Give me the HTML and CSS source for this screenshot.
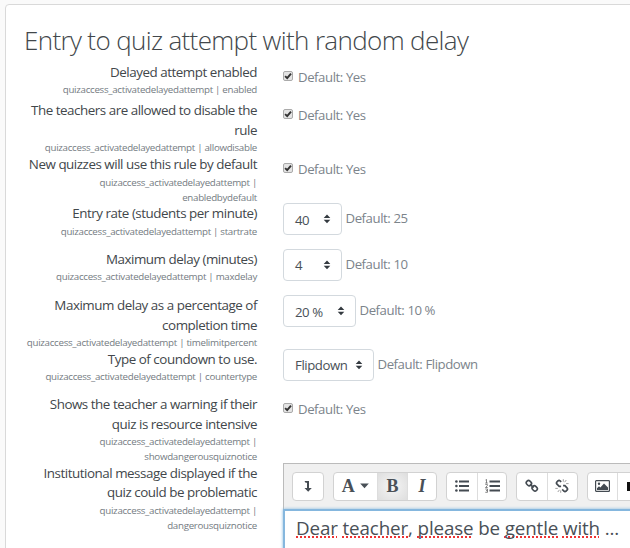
FILE: index.html
```html
<!DOCTYPE html>
<html lang="en">
<head>
<meta charset="utf-8">
<title>Entry to quiz attempt with random delay</title>
<link rel="stylesheet" href="styles.css">
</head>
<body>
<svg width="0" height="0" class="defs" aria-hidden="true">
  <symbol id="check" viewBox="0 0 10 10"><path d="M2.1 5.1 4.2 7.2 8 2.6" fill="none" stroke="#333" stroke-width="1.9"/></symbol>
  <symbol id="sort" viewBox="0 0 8 10"><path d="M4 .6 7.3 4.1H.7zM4 9.2.7 5.7h6.6z" fill="#343a40"/></symbol>
</svg>
<main class="card">
  <h1>Entry to quiz attempt with random delay</h1>
  <div class="settings">
    <div class="label">Delayed attempt enabled<small>quizaccess_activatedelayedattempt | enabled</small></div>
    <div class="field check"><span class="box"><svg><use href="#check"/></svg></span><span>Default: Yes</span></div>

    <div class="label">The teachers are allowed to disable the<br>rule<small>quizaccess_activatedelayedattempt | allowdisable</small></div>
    <div class="field check"><span class="box"><svg><use href="#check"/></svg></span><span>Default: Yes</span></div>

    <div class="label">New quizzes will use this rule by default<small>quizaccess_activatedelayedattempt |<br>enabledbydefault</small></div>
    <div class="field check"><span class="box"><svg><use href="#check"/></svg></span><span>Default: Yes</span></div>

    <div class="label">Entry rate (students per minute)<small>quizaccess_activatedelayedattempt | startrate</small></div>
    <div class="field"><span class="select number">40<svg><use href="#sort"/></svg></span><span>Default: 25</span></div>

    <div class="label">Maximum delay (minutes)<small>quizaccess_activatedelayedattempt | maxdelay</small></div>
    <div class="field"><span class="select number">4<svg><use href="#sort"/></svg></span><span>Default: 10</span></div>

    <div class="label">Maximum delay as a percentage of<br>completion time<small>quizaccess_activatedelayedattempt | timelimitpercent</small></div>
    <div class="field"><span class="select percent">20 %<svg><use href="#sort"/></svg></span><span>Default: 10 %</span></div>

    <div class="label">Type of coundown to use.<small>quizaccess_activatedelayedattempt | countertype</small></div>
    <div class="field"><span class="select type">Flipdown<svg><use href="#sort"/></svg></span><span>Default: Flipdown</span></div>

    <div class="label">Shows the teacher a warning if their<br>quiz is resource intensive<small>quizaccess_activatedelayedattempt |<br>showdangerousquiznotice</small></div>
    <div class="field check"><span class="box"><svg><use href="#check"/></svg></span><span>Default: Yes</span></div>

    <div class="label">Institutional message displayed if the<br>quiz could be problematic<small>quizaccess_activatedelayedattempt |<br>dangerousquiznotice</small></div>
    <div class="editor">
      <div class="toolbar">
        <div class="group"><span class="btn"><svg width="8" height="12" viewBox="0 0 8 12"><path d="M.5 1H5v7h2.8L4.2 11.8.5 8H3V2.8H1.6z" fill="#444b52"/></svg></span></div>
        <div class="group">
          <span class="btn wide serif">A<svg width="9" height="6" viewBox="0 0 9 6"><path d="M.2.4h8.6L4.5 5.2z" fill="#495057"/></svg></span>
          <span class="btn serif active">B</span>
          <span class="btn serif italic">I</span>
        </div>
        <div class="group">
          <span class="btn"><svg width="14" height="12" viewBox="0 0 14 12" fill="#444b52"><path d="M4 .6h10v1.8H4zM4 5.1h10v1.8H4zM4 9.6h10v1.8H4z"/><circle cx="1.4" cy="1.5" r="1.3"/><circle cx="1.4" cy="6" r="1.3"/><circle cx="1.4" cy="10.5" r="1.3"/></svg></span>
          <span class="btn"><svg width="15" height="14" viewBox="0 0 15 14"><path d="M4.5 1.6H15v1.8H4.5zM4.5 6.1H15v1.8H4.5zM4.5 10.6H15v1.8H4.5z" fill="#444b52"/><path d="M.5 1 1.5.4V4M.3 4h2.4M.3 5.4h2v1.3L.5 8.5h2.2M.3 10h2.2v3.3H.3M1 11.6h1.4" fill="none" stroke="#666" stroke-width=".8"/></svg></span>
        </div>
        <div class="group">
          <span class="btn"><svg width="14" height="14" viewBox="0 0 14 14" fill="none" stroke="#444b52" stroke-width="1.6"><rect x="1.2" y="2" width="5.4" height="4.4" rx="2" transform="rotate(45 3.9 4.2)"/><rect x="7" y="7.2" width="5.4" height="4.4" rx="2" transform="rotate(45 9.7 9.4)"/><path d="m5 5.2 3.6 3.4"/></svg></span>
          <span class="btn"><svg width="14" height="14" viewBox="0 0 14 14" fill="none" stroke="#444b52" stroke-width="1.7"><path d="M6.2 2.9 5.1 1.8Q4 .9 2.8 2L2 2.8Q.9 4 2 5.2l2.2 2.1h1.9M8.1 6.6h1.8L12 8.8q1.1 1.2 0 2.4l-.8.8q-1.2 1.1-2.4 0l-1.6-1.6"/><path d="M8.3.2v2.5M11.3 1 9.6 3.2M13.6 4.6h-2.5M.3 9.4h2.5M2.8 13l1.7-2.2M5.7 13.8v-2.4" stroke="#888" stroke-width=".8"/></svg></span>
        </div>
        <div class="group">
          <span class="btn"><svg width="15" height="12" viewBox="0 0 15 12"><rect x=".6" y=".6" width="13.8" height="10.8" rx=".7" fill="none" stroke="#444b52" stroke-width="1.2"/><circle cx="4" cy="3.7" r="1.2" fill="#444b52"/><path d="M2 10V8.2l2-2 1.3 1.2L9 3.4l4 4V10z" fill="#444b52"/></svg></span>
          <span class="btn media"><svg width="14" height="9" viewBox="0 0 14 9"><path d="M0 0h3v3.2h6V0h3v9H9V5.6H3V9H0z" fill="#111"/></svg></span>
        </div>
      </div>
      <div class="content"><u>Dear</u> <u>teacher</u>, <u>please</u> be <u>gentle</u> <u>with</u> ...</div>
    </div>
  </div>
</main>
</body>
</html>
```
FILE: styles.css
```css
* { box-sizing: border-box; }
body {
  margin: 0;
  padding: 4px 0 0 5px;
  width: 630px;
  height: 548px;
  overflow: hidden;
  background: #fafafa;
  color: #42474b;
  font-family: "Open Sans", "Noto Sans", sans-serif;
}
.defs { display: block; height: 0; }
.card {
  width: 650px;
  height: 560px;
  border: 1px solid #d9d9d9;
  border-radius: 4px 0 0 0;
  background: #fff;
  padding: 15px 0 0 18px;
}
h1 {
  margin: 0;
  height: 42.5px;
  line-height: 41px;
  font-size: 26px;
  font-weight: 300;
  letter-spacing: -0.64px;
  white-space: nowrap;
}
.settings {
  display: grid;
  grid-template-columns: 233px 375px;
  grid-template-rows: 38.5px 54px 49px 45.5px 46.5px 53.5px 45.5px 68.5px 90px;
  column-gap: 26px;
}
.label {
  text-align: right;
  font-size: 13.4px;
  line-height: 19.5px;
  letter-spacing: -0.47px;
  white-space: nowrap;
}
small {
  display: block;
  font-size: 9.75px;
  line-height: 15px;
  letter-spacing: -0.3px;
  color: #747b82;
}
.field {
  display: flex;
  align-items: flex-start;
  gap: 3.5px;
  height: 32px;
  margin-top: -1px;
  font-size: 13.2px;
  line-height: 30px;
  letter-spacing: -0.43px;
  color: #7c848b;
  white-space: nowrap;
}
.check { gap: 5px; line-height: 31px; }
.box {
  width: 10px;
  height: 10px;
  margin-top: 9px;
  border: 1px solid #aaa;
  border-radius: 2px;
  background: #e4e4e4;
}
.box svg { display: block; width: 10px; height: 10px; margin: -1px; }
.select {
  display: flex;
  align-items: center;
  justify-content: space-between;
  height: 32px;
  padding: 1px 10px 0 11px;
  border: 1px solid #d3d9de;
  border-radius: 4px;
  color: #495057;
}
.select svg { width: 8px; height: 10px; margin-top: -1px; }
.number { width: 59px; }
.percent { width: 73px; }
.type { width: 91px; }
.editor {
  height: 100px;
  margin-top: -1px;
  border: 1px solid #bbb;
  background: #f0f0f0;
}
.toolbar {
  display: flex;
  gap: 9px;
  height: 45px;
  padding: 8px 0 0 8px;
}
.group {
  display: flex;
  flex: none;
  height: 29px;
  border: 1px solid #d2d2d2;
  border-radius: 4px;
  background: #fff;
  overflow: hidden;
}
.btn {
  display: flex;
  align-items: center;
  justify-content: center;
  width: 29.6px;
}
.btn + .btn { border-left: 1px solid #ddd; }
.wide { width: 43.5px; gap: 5px; }
.serif {
  font: bold 18px "Liberation Serif", serif;
  color: #495057;
}
.italic { font-style: italic; }
.active { background: radial-gradient(#f5f5f5, #dedede); }
.media { justify-content: flex-start; padding-left: 9px; }
.content {
  height: 60px;
  margin-left: -1px;
  padding: 1px 0 0 11px;
  border: 2px solid #85b7de;
  box-shadow: 0 0 3px #85b7de;
  background: #fff;
  color: #495057;
  font-size: 18.8px;
  line-height: 32px;
  letter-spacing: -0.13px;
  white-space: nowrap;
}
.content u {
  text-decoration: underline dotted #e33 1.6px;
  text-underline-offset: 2px;
  text-decoration-skip-ink: none;
}
```
